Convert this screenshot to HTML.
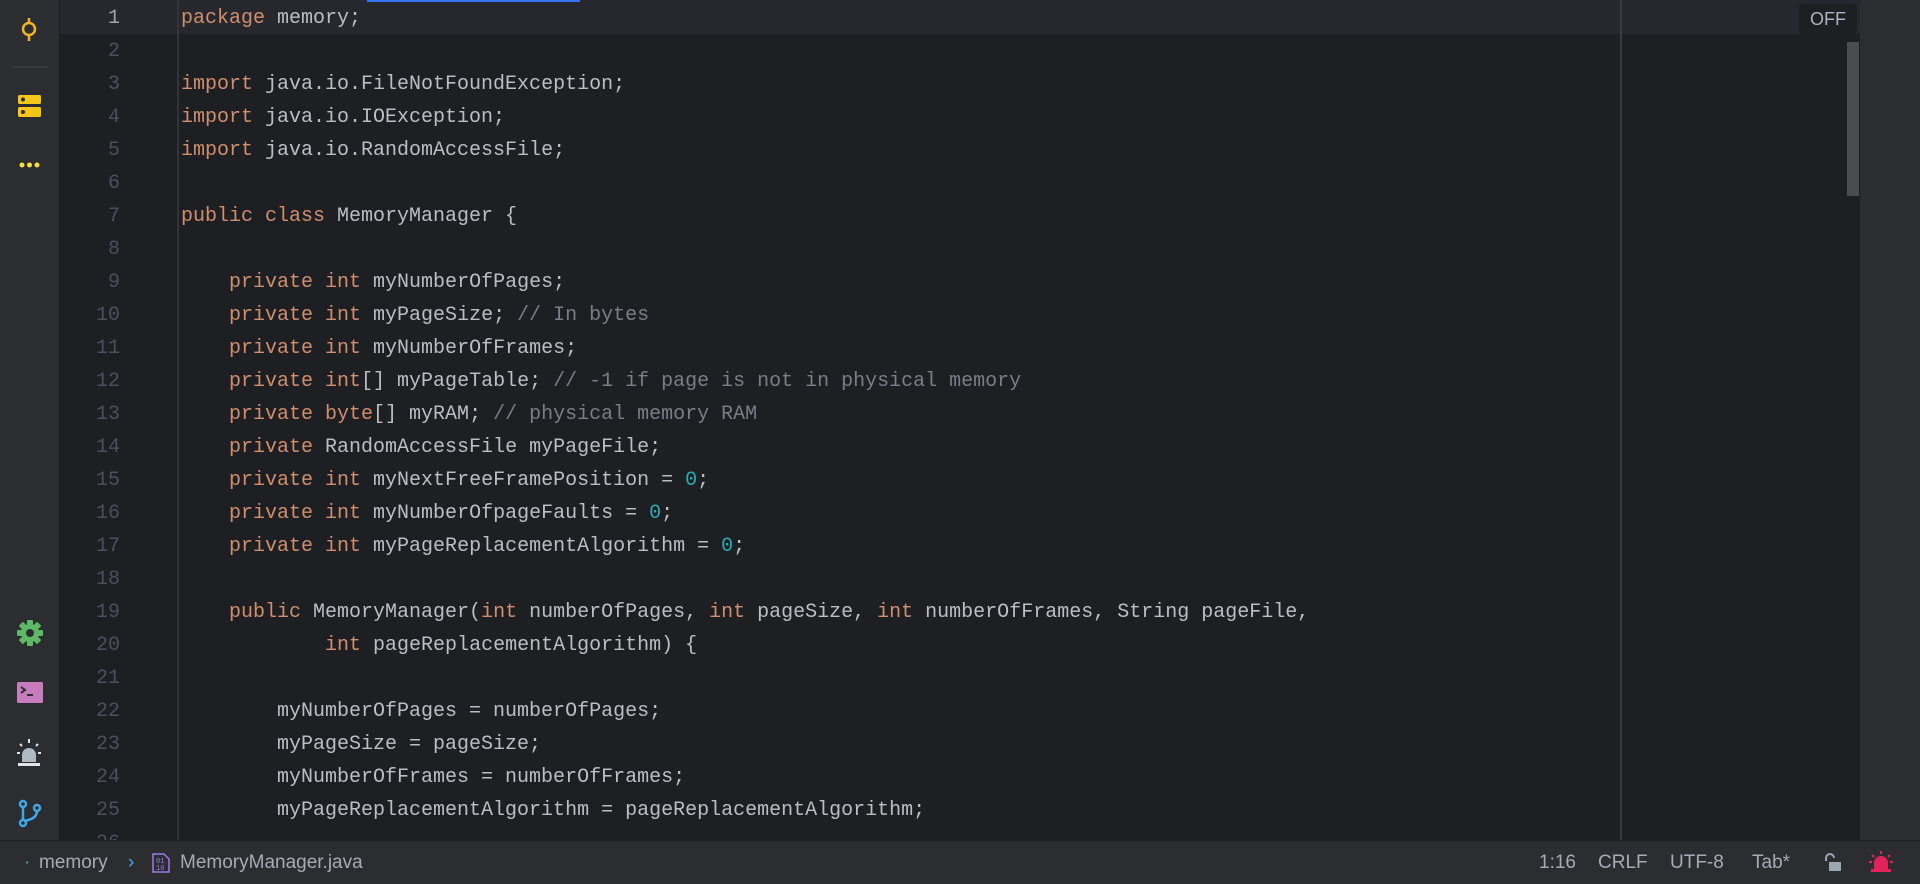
<!DOCTYPE html>
<html><head><meta charset="utf-8"><style>
*{margin:0;padding:0;box-sizing:border-box}
body{width:1920px;height:884px;overflow:hidden;background:#1e1f22;position:relative;font-family:"Liberation Sans",sans-serif}
#lb{position:absolute;left:0;top:0;width:60px;height:840px;background:#2b2d30;border-right:1px solid #1e1f22}
#rb{position:absolute;left:1860px;top:0;width:60px;height:840px;background:#2b2d30}
#hl{position:absolute;left:60px;top:0;width:1800px;height:34px;background:#26282e}
#gl{position:absolute;left:177px;top:0;width:2px;height:840px;background:#313438}
#ml{position:absolute;left:1620px;top:0;width:2px;height:840px;background:#393b40}
#tb{position:absolute;left:367px;top:0;width:213px;height:2px;background:#3574f0}
.ln{position:absolute;left:60px;width:60px;text-align:right;font:20px/33px "Liberation Mono",monospace;color:#4b5059}
.cl{position:absolute;left:181px;font:20px/33px "Liberation Mono",monospace;color:#bcbec4;white-space:pre}
.k{color:#cf8e6d}.c{color:#7a7e85}.n{color:#2aacb8}
#code{position:absolute;left:0;top:0;width:1860px;height:840px;overflow:hidden}
#sb{position:absolute;left:0;top:840px;width:1920px;height:44px;background:#2b2d30;border-top:1px solid #1e1f22;color:#a8abb2;font-size:19px}
#sb span{position:absolute;top:11px}
#off{position:absolute;left:1799px;top:4px;width:58px;height:30px;background:#1e1f22;border-radius:4px;color:#a8b4c2;font-size:18px;text-align:center;line-height:30px}
#scr{position:absolute;left:1847px;top:42px;width:12px;height:154px;background:#4b4c4f}
</style></head><body>
<div id="code">
<div id="hl"></div>
<div id="gl"></div><div id="ml"></div>
<div id="lines"></div>
</div>
<div id="tb"></div>
<div id="lb">
<svg width="60" height="840" style="position:absolute;left:0;top:0">
<g stroke="#f0b429" stroke-width="2.5" fill="none"><line x1="29" y1="18" x2="29" y2="41"/><circle cx="29" cy="29" r="6" fill="#2b2d30"/></g>
<line x1="12" y1="67" x2="48" y2="67" stroke="#43454a" stroke-width="1"/>
<rect x="18" y="95" width="23" height="9" rx="1.5" fill="#f5c518"/><rect x="18" y="107" width="23" height="10" rx="1.5" fill="#f5c518"/>
<circle cx="23" cy="99.5" r="2" fill="#2b2d30"/><circle cx="23" cy="112" r="2" fill="#2b2d30"/>
<circle cx="22" cy="165" r="2.5" fill="#f5e03a"/><circle cx="29.5" cy="165" r="2.5" fill="#f5e03a"/><circle cx="37" cy="165" r="2.5" fill="#f5e03a"/>
<g transform="translate(30,633)"><circle r="9" fill="#5fb865"/><g fill="#5fb865"><rect x="-3" y="-13" width="6" height="26" rx="1"/><rect x="-3" y="-13" width="6" height="26" rx="1" transform="rotate(45)"/><rect x="-3" y="-13" width="6" height="26" rx="1" transform="rotate(90)"/><rect x="-3" y="-13" width="6" height="26" rx="1" transform="rotate(135)"/></g><circle r="4" fill="#2b2d30"/></g>
<rect x="17" y="682" width="26" height="21" rx="1.5" fill="#c77dbb"/>
<path d="M21 687 l4 3 -4 3" stroke="#2b2d30" stroke-width="2" fill="none"/><line x1="27" y1="695" x2="33" y2="695" stroke="#2b2d30" stroke-width="2"/>
<path d="M22 762 v-7 a7 7 0 0 1 14 0 v7 z" fill="#adbac4"/><rect x="18" y="763" width="22" height="3" fill="#e0e4e8"/>
<g stroke="#e0e4e8" stroke-width="2"><line x1="29" y1="739" x2="29" y2="743"/><line x1="20" y1="744" x2="22" y2="746"/><line x1="38" y1="744" x2="36" y2="746"/><line x1="17" y1="753" x2="20" y2="753"/><line x1="38" y1="753" x2="41" y2="753"/></g>
<g stroke="#3fa9e8" stroke-width="2.5" fill="none"><circle cx="23" cy="804" r="3"/><circle cx="23" cy="823" r="3"/><circle cx="37" cy="808" r="3"/><line x1="23" y1="807" x2="23" y2="820"/><path d="M37 811 q0 8 -13 10"/></g>
</svg>
</div>
<div id="rb"></div>
<div id="scr"></div>
<div id="off">OFF</div>
<div id="sb">
<span style="left:24px;color:#5a9e9a">·</span><span style="left:39px">memory</span>
<span style="left:128px;color:#4fa3e3">&#x203A;</span>
<svg style="position:absolute;left:152px;top:12px" width="18" height="20"><path d="M1 1 h11 l5 5 v13 h-16 z" fill="none" stroke="#9b7ae8" stroke-width="1.5"/><text x="4" y="10" font-size="7" fill="#9b7ae8" font-family="Liberation Mono">01</text><text x="4" y="17" font-size="7" fill="#9b7ae8" font-family="Liberation Mono">10</text></svg>
<span style="left:180px">MemoryManager.java</span>
<span style="left:1539px">1:16</span><span style="left:1598px">CRLF</span><span style="left:1670px">UTF-8</span><span style="left:1752px">Tab*</span>
<svg style="position:absolute;left:1823px;top:12px" width="20" height="20"><path d="M3 8 v-3 a4 4 0 0 1 8 0" stroke="#9aa7b0" stroke-width="2" fill="none"/><rect x="6" y="9" width="12" height="9" fill="#9aa7b0"/></svg>
<svg style="position:absolute;left:1868px;top:9px" width="26" height="24"><path d="M6 19 v-6 a7 7 0 0 1 14 0 v6 z" fill="#e3225c"/><rect x="3" y="19" width="20" height="3" fill="#e3225c"/><g stroke="#e3225c" stroke-width="2"><line x1="13" y1="1" x2="13" y2="4"/><line x1="4" y1="5" x2="6" y2="7"/><line x1="22" y1="5" x2="20" y2="7"/><line x1="1" y1="12" x2="4" y2="12"/><line x1="22" y1="12" x2="25" y2="12"/></g></svg>
</div>
<script>
const L=[
'<span class="k">package</span> memory;','',
'<span class="k">import</span> java.io.FileNotFoundException;',
'<span class="k">import</span> java.io.IOException;',
'<span class="k">import</span> java.io.RandomAccessFile;','',
'<span class="k">public class</span> MemoryManager {','',
'    <span class="k">private int</span> myNumberOfPages;',
'    <span class="k">private int</span> myPageSize; <span class="c">// In bytes</span>',
'    <span class="k">private int</span> myNumberOfFrames;',
'    <span class="k">private int</span>[] myPageTable; <span class="c">// -1 if page is not in physical memory</span>',
'    <span class="k">private byte</span>[] myRAM; <span class="c">// physical memory RAM</span>',
'    <span class="k">private</span> RandomAccessFile myPageFile;',
'    <span class="k">private int</span> myNextFreeFramePosition = <span class="n">0</span>;',
'    <span class="k">private int</span> myNumberOfpageFaults = <span class="n">0</span>;',
'    <span class="k">private int</span> myPageReplacementAlgorithm = <span class="n">0</span>;','',
'    <span class="k">public</span> MemoryManager(<span class="k">int</span> numberOfPages, <span class="k">int</span> pageSize, <span class="k">int</span> numberOfFrames, String pageFile,',
'            <span class="k">int</span> pageReplacementAlgorithm) {','',
'        myNumberOfPages = numberOfPages;',
'        myPageSize = pageSize;',
'        myNumberOfFrames = numberOfFrames;',
'        myPageReplacementAlgorithm = pageReplacementAlgorithm;',''];
let h='';
L.forEach((t,i)=>{const y=2+i*33;h+=`<div class="ln" style="top:${y}px;${i==0?'color:#a1a3ab':''}">${i+1}</div><div class="cl" style="top:${y}px">${t}</div>`;});
document.getElementById('lines').innerHTML=h;
</script>
</body></html>
